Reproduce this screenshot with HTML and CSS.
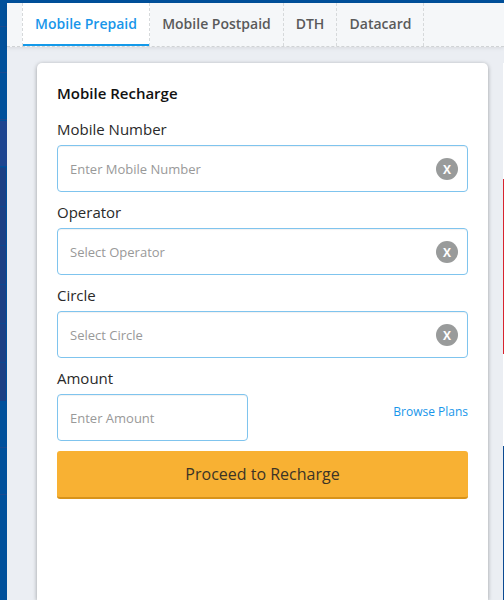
FILE: index.html
```html
<!DOCTYPE html>
<html lang="en">
<head>
<meta charset="utf-8">
<title>Mobile Recharge</title>
<link rel="stylesheet" href="styles.css">
</head>
<body>
<div class="page">
  <nav class="tabs">
    <a class="tab active">Mobile Prepaid</a>
    <a class="tab postpaid">Mobile Postpaid</a>
    <a class="tab dth">DTH</a>
    <a class="tab datacard">Datacard</a>
  </nav>
  <main class="content">
    <form class="card">
      <h1>Mobile Recharge</h1>
      <div class="field">
        <label>Mobile Number</label>
        <div class="box"><span>Enter Mobile Number</span><b class="clear">X</b></div>
      </div>
      <div class="field">
        <label>Operator</label>
        <div class="box"><span>Select Operator</span><b class="clear">X</b></div>
      </div>
      <div class="field">
        <label>Circle</label>
        <div class="box"><span>Select Circle</span><b class="clear">X</b></div>
      </div>
      <div class="field">
        <label>Amount</label>
        <div class="amount-row">
          <div class="box short"><span>Enter Amount</span></div>
          <a class="plans">Browse Plans</a>
        </div>
      </div>
      <button class="proceed" type="button">Proceed to Recharge</button>
    </form>
    <aside class="side">
      <div class="side-red"></div>
      <div class="side-blue"></div>
    </aside>
  </main>
</div>
</body>
</html>
```
FILE: styles.css
```css
* { box-sizing: border-box; }
body {
  margin: 0;
  width: 504px;
  height: 600px;
  overflow: hidden;
  padding: 3px 0 0 7px;
  font-family: "Open Sans", sans-serif;
  background:
    linear-gradient(#1e4590, #1e4590) 0 121px / 7px 45px no-repeat,
    linear-gradient(#1a4a90, #1a4a90) 0 26px / 7px 1px no-repeat,
    linear-gradient(#1a4a90, #1a4a90) 0 72px / 7px 1px no-repeat,
    linear-gradient(#1a4a90, #1a4a90) 0 119px / 7px 1px no-repeat,
    linear-gradient(#1a4a90, #1a4a90) 0 447px / 7px 1px no-repeat,
    linear-gradient(#1a4a90, #1a4a90) 0 494px / 7px 1px no-repeat,
    repeating-linear-gradient(#0c478f 0 1px, #1b4085 1px 39px) 0 167px / 6px 234px no-repeat,
    #00509b;
}
.page {
  height: 597px;
  display: flex;
  flex-direction: column;
  background: #ebeef3;
}
.tabs {
  height: 44px;
  flex: none;
  display: flex;
  padding-left: 15px;
  background: #f5f7f9;
  border-bottom: 1px dashed #d0d3d5;
  box-shadow: 0 1px 4px rgba(0, 0, 0, .09);
}
.tab {
  height: 43px;
  border-right: 1px dashed #d6d9db;
  text-align: center;
  font-size: 14px;
  font-weight: 600;
  line-height: 41px;
  color: #5a5a5a;
  white-space: nowrap;
}
.tab.active {
  width: 128px;
  border-left: 1px dashed #d6d9db;
  color: #1896ea;
  background: linear-gradient(#1499e9, #1499e9) 0 100% / 100% 2px no-repeat, #fff;
}
.postpaid { width: 134px; }
.dth { width: 53px; }
.datacard { width: 87px; padding-left: 1px; }
.content {
  flex: 1;
  display: flex;
  padding: 16px 0 0 30px;
}
.card {
  width: 451px;
  height: 537px;
  flex: none;
  padding: 19px 20px 0;
  background: #fff;
  border-radius: 5px 5px 0 0;
  box-shadow: 0 1px 4px rgba(0, 0, 0, .35);
}
h1 {
  margin: 0;
  height: 35px;
  font-size: 15px;
  font-weight: 600;
  line-height: 22px;
  color: #111;
}
.field { height: 83px; }
label {
  display: block;
  height: 28px;
  font-size: 15px;
  line-height: 25px;
  color: #2a2a2a;
}
.box {
  height: 47px;
  display: flex;
  align-items: center;
  justify-content: space-between;
  padding: 0 9px 0 12px;
  border: 1px solid #7fc4ee;
  border-radius: 4px;
  background: #fff;
  box-shadow: inset 0 1px 1px rgba(0, 0, 0, .06);
  font-size: 13px;
  color: #999;
}
.short { width: 191px; }
.clear {
  width: 22px;
  height: 22px;
  border-radius: 50%;
  background: #999b9b;
  color: #fff;
  font-size: 12px;
  line-height: 23px;
  text-align: center;
}
.amount-row {
  display: flex;
  justify-content: space-between;
}
.plans {
  padding-top: 9px;
  font-size: 12px;
  line-height: 18px;
  color: #1896ea;
}
.proceed {
  display: block;
  width: 411px;
  height: 48px;
  margin-top: 2px;
  padding: 0;
  border: 0;
  border-bottom: 2px solid #d8931a;
  border-radius: 3px;
  background: #f8b133;
  font: 16px/46px "Open Sans", sans-serif;
  color: #3c3426;
}
.side {
  width: 1px;
  height: 537px;
  margin-left: 15px;
  padding-top: 116px;
  background: #fff;
}
.side-red { height: 175px; background: #d8232e; }
.side-blue { height: 154px; margin-top: 92px; background: #0b4a92; }
```
